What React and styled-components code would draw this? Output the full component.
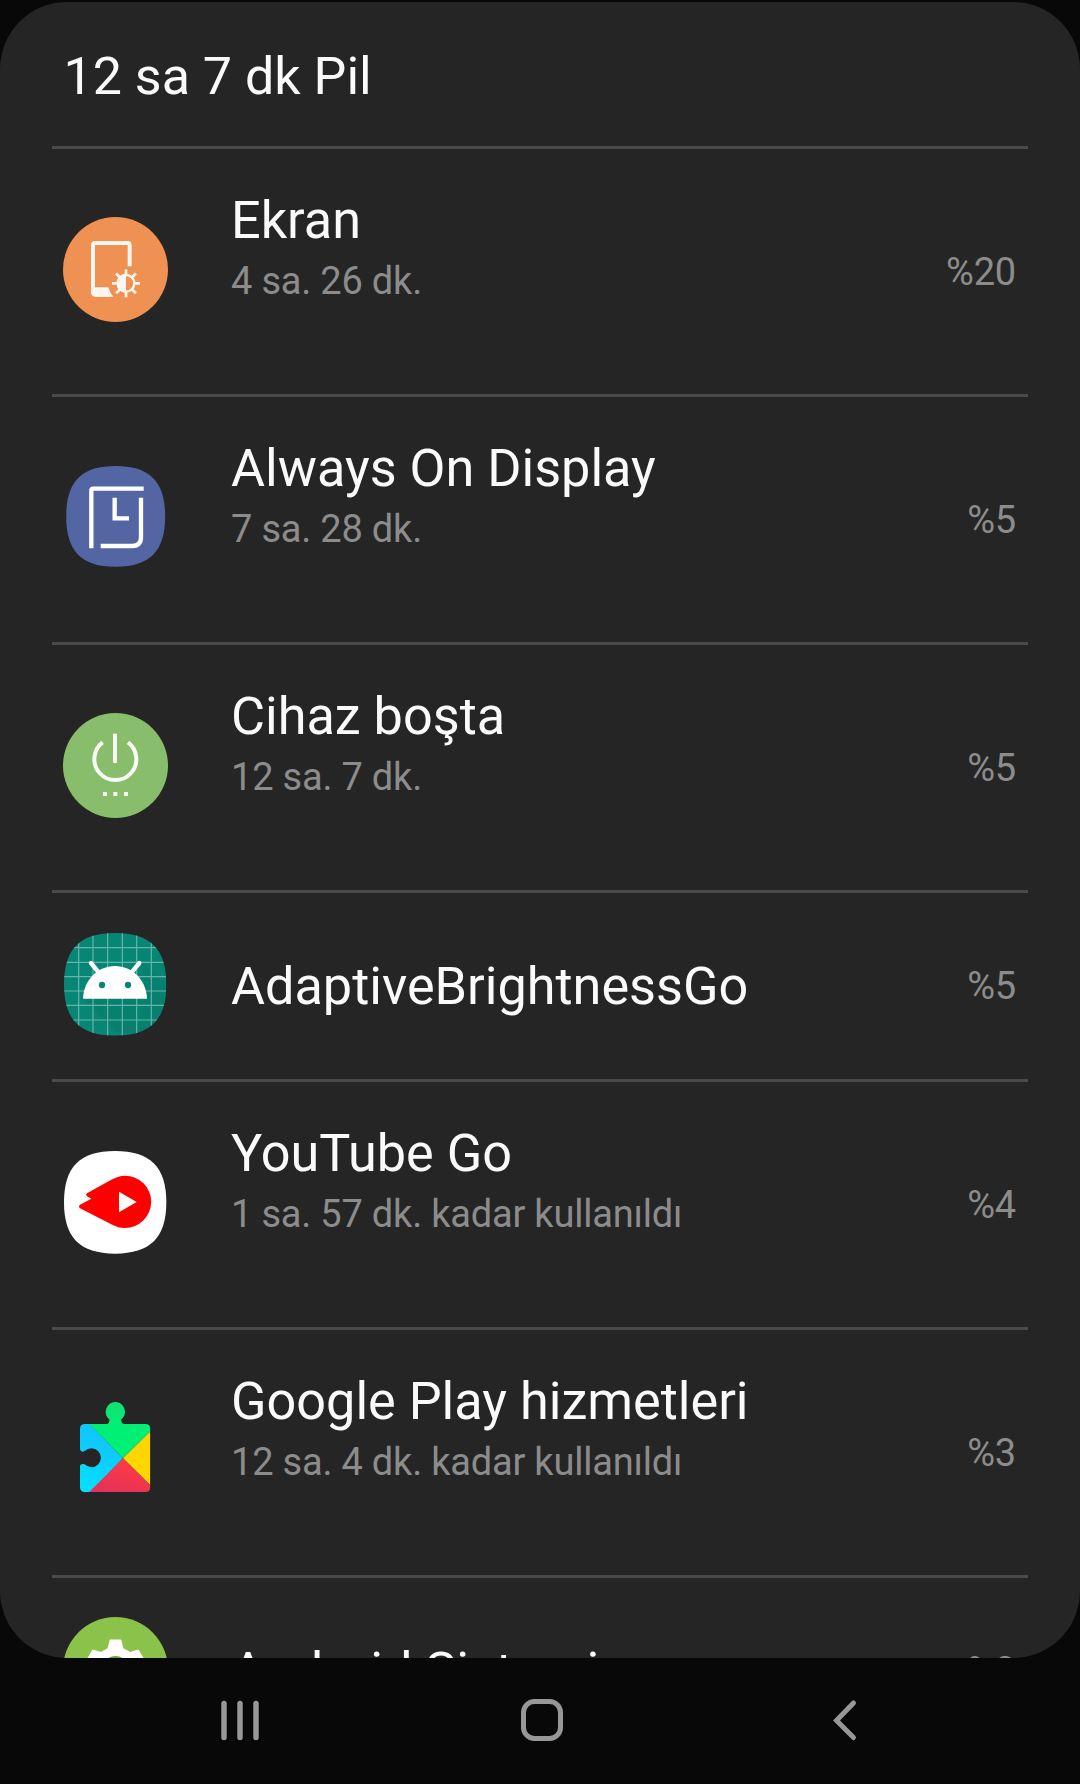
import React from 'react'
import styled, { createGlobalStyle } from 'styled-components'

const GlobalStyle = createGlobalStyle`
body {
    margin: 0;
    background: #080808;
    font-family: Roboto, "Noto Sans", sans-serif;
}
`

const Screen = styled.div`
width: 1080px;
height: 1784px;
box-sizing: border-box;
padding-top: 2px;
display: flex;
flex-direction: column;
background: #080808;
overflow: hidden;
`

const Panel = styled.div`
height: 1656px;
box-sizing: border-box;
padding: 0 52px;
border-radius: 67px;
background: #252525;
overflow: hidden;
`

const Header = styled.div`
height: 144px;
box-sizing: border-box;
padding: 4px 0 0 11.5px;
display: flex;
align-items: center;
color: #fafafa;
font-size: 52px;
`

const Row = styled.div`
height: ${(props) => (props.$single ? 189 : 248)}px;
box-sizing: border-box;
border-top: 3px solid #4a4a4a;
padding: 0 12px 4px 10.5px;
display: flex;
align-items: center;
`

const Icon = styled.svg`
width: 105px;
height: 105px;
flex: none;
`

const Info = styled.div`
flex: 1;
margin-left: 63.5px;
padding: ${(props) => (props.$single ? '5px 0 0' : '0 0 47px')};
`

const Name = styled.div`
color: #fafafa;
font-size: 52.2px;
line-height: 62px;
white-space: nowrap;
`

const Usage = styled.div`
margin-top: 7px;
color: #8c8c8c;
font-size: 38px;
line-height: 44px;
letter-spacing: -0.2px;
white-space: nowrap;
`

const Percent = styled.div`
margin-top: ${(props) => (props.$single ? 3 : 5)}px;
color: #8c8c8c;
font-size: 38px;
line-height: 44px;
letter-spacing: -0.2px;
`

const NavBar = styled.div`
flex: 1;
padding-left: 89px;
display: grid;
grid-template-columns: repeat(3, 302px);
align-items: center;
justify-items: center;
`

const NavIcon = styled.svg`
width: 44px;
height: 44px;
fill: none;
stroke: #979797;
`

const SQUIRCLE = 'M195 39C301 39 349 87 349 193C349 299 301 347 195 347C89 347 42 299 42 193C42 87 89 39 195 39Z'

const DisplayIcon = () => (
    <Icon viewBox="39 51 315 315">
        <circle cx="196.5" cy="208.5" r="157.5" fill="#f09154" />
        <path d="M239 199V136Q239 129 232 129H136Q129 129 129 136V277Q129 284 136 284H178" fill="none" stroke="#fdf6f0" strokeWidth="12" />
        <path d="M130 262H175Q180 280 190 290H136Q130 290 130 284Z" fill="#fdf6f0" />
        <g stroke="#fdf6f0" strokeWidth="8">
            {[0, 45, 90, 135, 180, 225, 270, 315].map((a) => (
                <path key={a} d="M228 208V224" transform={`rotate(${a} 228 250)`} />
            ))}
        </g>
        <circle cx="228" cy="250" r="25" fill="none" stroke="#fdf6f0" strokeWidth="7" />
        <path d="M228 222A28 28 0 0 0 228 278Z" fill="#fdf6f0" />
    </Icon>
)

const ClockIcon = () => (
    <Icon viewBox="39 45 315 315">
        <path d={SQUIRCLE} fill="#5465a3" transform="translate(8 10) scale(.967 .98)" />
        <g fill="none" stroke="#fff" strokeWidth="13">
            <path d="M124 295V122Q124 116 130 116H281" />
            <path d="M273 143V262Q273 288 247 288H152" />
            <path d="M194 143V205H237" />
        </g>
    </Icon>
)

const PowerIcon = () => (
    <Icon viewBox="39 39 315 315">
        <circle cx="196.5" cy="196.5" r="157.5" fill="#88be6b" />
        <g fill="none" stroke="#f8fcf5" strokeWidth="12">
            <path d="M195 101V189" />
            <path d="M158 127A63 63 0 1 0 234 127" />
        </g>
        <path d="M159 276h12v12h-12zM190 276h12v12h-12zM222 276h12v12h-12z" fill="#f8fcf5" />
    </Icon>
)

const RobotIcon = () => (
    <Icon viewBox="39 36 315 315">
        <clipPath id="robot-clip"><path d={SQUIRCLE} /></clipPath>
        <g clipPath="url(#robot-clip)">
            <path d="M39 36h315v315H39z" fill="#088675" />
            <path d="M100 236L200 336L354 351V190L272 126L290 236Z" fill="#067d6d" opacity=".6" />
            <path d="M86 36V351M129 36V351M173 36V351M217 36V351M260 36V351M304 36V351M39 83H354M39 127H354M39 170H354M39 213H354M39 256H354M39 300H354" stroke="#66b5aa" strokeWidth="3.5" />
        </g>
        <path d="M123 129L146 157M268 129L245 157" stroke="#fff" strokeWidth="13" strokeLinecap="round" />
        <path d="M99 236C101 180 143 138 195 138S289 180 291 236Z" fill="#fff" />
        <circle cx="156" cy="195" r="9.5" fill="#088675" />
        <circle cx="234" cy="195" r="9.5" fill="#088675" />
    </Icon>
)

const VideoIcon = () => (
    <Icon viewBox="39 30 315 315">
        <path d={SQUIRCLE} fill="#fff" transform="translate(0 -6)" />
        <path d="M111 160L184 119C197 112 210 107 225 107A78 78 0 0 1 225 264C210 264 199 260 187 254L90 205Q84 200 90 194L124 176L110 168Q106 164 111 160Z" fill="#f00" />
        <path d="M207 155L260 186L207 217Z" fill="#fff" />
    </Icon>
)

const PuzzleIcon = () => (
    <Icon viewBox="39 54 315 315">
        <defs>
            <linearGradient id="puzzle-blue" x1="0" y1="1" x2=".4" y2="0">
                <stop offset="0" stopColor="#00e5ff" />
                <stop offset="1" stopColor="#12c2fd" />
            </linearGradient>
            <linearGradient id="puzzle-red" x1="0" y1="1" x2=".5" y2="0">
                <stop offset="0" stopColor="#e0305b" />
                <stop offset="1" stopColor="#ff3a45" />
            </linearGradient>
            <linearGradient id="puzzle-green" x1="0" y1="0" x2="0" y2="1">
                <stop offset="0" stopColor="#17dc72" />
                <stop offset=".45" stopColor="#00f076" />
            </linearGradient>
            <clipPath id="puzzle-clip">
                <path d="M105 132H172Q180 129 178 118A29 29 0 1 1 214 118Q212 129 222 132H286Q301 132 301 147V321Q301 336 286 336H105Q90 336 90 321V258Q92 249 104 253A28.500 28.500 0 1 0 104 213Q93 219 90 208V147Q90 132 105 132Z" />
            </clipPath>
        </defs>
        <g clipPath="url(#puzzle-clip)">
            <path d="M60 130H117L219 235L118 340H60Z" fill="url(#puzzle-blue)" />
            <path d="M116 130V60H310V145L219 235Z" fill="url(#puzzle-green)" />
            <path d="M304 151V319L219 235Z" fill="#ffd600" />
            <path d="M219 235L321 336V340H114Z" fill="url(#puzzle-red)" />
        </g>
    </Icon>
)

const GearIcon = () => (
    <Icon viewBox="-52.5 -52.5 105 105">
        <circle r="52.5" fill="#8bc34a" />
        <circle r="14" fill="#6fa03c" />
        <circle r="18" fill="none" stroke="#fff" strokeWidth="9" />
        {[0, 60, 120, 180, 240, 300].map((a) => (
            <path key={a} d="M-10 -19L-8 -21L-6 -29Q-6 -30 -5 -30H5Q6 -30 6 -29L8 -21L10 -19Z" fill="#fff" transform={`rotate(${a})`} />
        ))}
    </Icon>
)

const apps = [
    { name: 'Ekran', usage: '4 sa. 26 dk.', percent: '%20', icon: DisplayIcon },
    { name: 'Always On Display', usage: '7 sa. 28 dk.', percent: '%5', icon: ClockIcon },
    { name: 'Cihaz boşta', usage: '12 sa. 7 dk.', percent: '%5', icon: PowerIcon },
    { name: 'AdaptiveBrightnessGo', percent: '%5', icon: RobotIcon },
    { name: 'YouTube Go', usage: '1 sa. 57 dk. kadar kullanıldı', percent: '%4', icon: VideoIcon },
    { name: 'Google Play hizmetleri', usage: '12 sa. 4 dk. kadar kullanıldı', percent: '%3', icon: PuzzleIcon },
    { name: 'Android Sistemi', percent: '%3', icon: GearIcon },
]

const App = () => {
    return (
        <Screen>
            <GlobalStyle />
            <Panel>
                <Header>12 sa 7 dk Pil</Header>
                {apps.map(({ name, usage, percent, icon: AppIcon }) => (
                    <Row key={name} $single={!usage}>
                        <AppIcon />
                        <Info $single={!usage}>
                            <Name>{name}</Name>
                            {usage && <Usage>{usage}</Usage>}
                        </Info>
                        <Percent $single={!usage}>{percent}</Percent>
                    </Row>
                ))}
            </Panel>
            <NavBar>
                <NavIcon viewBox="0 0 44 44" strokeWidth="5.500" strokeLinecap="round">
                    <path d="M6 4.500V38.500M22 4.500V38.500M38 4.500V38.500" />
                </NavIcon>
                <NavIcon viewBox="0 0 44 44" strokeWidth="5">
                    <rect x="3.500" y="2.500" width="37" height="37" rx="11" />
                </NavIcon>
                <NavIcon viewBox="0 0 44 44" strokeWidth="5" strokeLinecap="round">
                    <path d="M31.500 4L14.500 21.500L31.500 38.500" />
                </NavIcon>
            </NavBar>
        </Screen>
    )
}

export default App
